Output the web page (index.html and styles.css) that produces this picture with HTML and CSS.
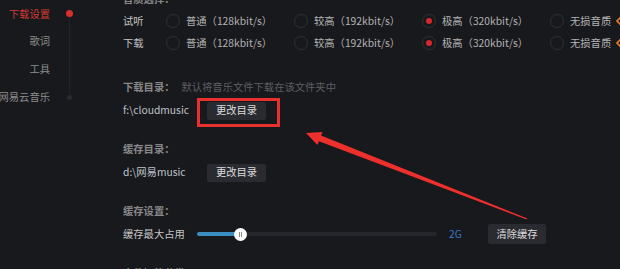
FILE: index.html
```html
<!DOCTYPE html>
<html lang="zh-CN">
<head>
<meta charset="utf-8">
<title>下载设置</title>
<link rel="stylesheet" href="styles.css">
</head>
<body>
<div class="app">
  <nav class="sidebar">
    <div class="nav-item first active"><span class="nav-text">下载设置</span><span class="nav-mark"><i class="dot red"></i></span></div>
    <div class="nav-item"><span class="nav-text">歌词</span><span class="nav-mark"></span></div>
    <div class="nav-item"><span class="nav-text">工具</span><span class="nav-mark"></span></div>
    <div class="nav-item last"><span class="nav-text">网易云音乐</span><span class="nav-mark"><i class="dot dim"></i></span></div>
  </nav>
  <main class="content">
    <section class="section quality">
      <div class="title">音质选择：</div>
      <div class="q-row">
        <span class="q-label">试听</span>
        <label class="option"><span class="radio"></span><span>普通（128kbit/s）</span></label>
        <label class="option"><span class="radio"></span><span>较高（192kbit/s）</span></label>
        <label class="option"><span class="radio checked"><i></i></span><span>极高（320kbit/s）</span></label>
        <label class="option"><span class="radio"></span><span>无损音质</span><svg class="sq" width="10" height="10" viewBox="0 0 10 10"><path d="M5 1 L9 5 L5 9 L1 5 Z" fill="none" stroke="#e0782c" stroke-width="1.6"/></svg></label>
      </div>
      <div class="q-row">
        <span class="q-label">下载</span>
        <label class="option"><span class="radio"></span><span>普通（128kbit/s）</span></label>
        <label class="option"><span class="radio"></span><span>较高（192kbit/s）</span></label>
        <label class="option"><span class="radio checked"><i></i></span><span>极高（320kbit/s）</span></label>
        <label class="option"><span class="radio"></span><span>无损音质</span><svg class="sq" width="10" height="10" viewBox="0 0 10 10"><path d="M5 1 L9 5 L5 9 L1 5 Z" fill="none" stroke="#e0782c" stroke-width="1.6"/></svg></label>
      </div>
    </section>

    <section class="section dir">
      <div class="title">下载目录：<span class="hint">默认将音乐文件下载在该文件夹中</span></div>
      <div class="row">
        <span class="path">f:\cloudmusic</span>
        <button class="btn">更改目录</button>
      </div>
    </section>

    <section class="section">
      <div class="title">缓存目录：</div>
      <div class="row">
        <span class="path">d:\网易music</span>
        <button class="btn">更改目录</button>
      </div>
    </section>

    <section class="section">
      <div class="title">缓存设置：</div>
      <div class="row">
        <span class="slider-label">缓存最大占用</span>
        <div class="track">
          <div class="fill" style="width:43px"></div>
          <div class="thumb" style="left:43px"><i></i><i></i></div>
        </div>
        <span class="size">2G</span>
        <button class="btn btn-clear">清除缓存</button>
      </div>
    </section>

    <section class="section">
      <div class="title">文件智能分类：</div>
    </section>
  </main>
</div>

<svg class="annot" width="620" height="269" viewBox="0 0 620 269">
  <rect x="198.5" y="99.5" width="80" height="26" fill="none" stroke="#e8302e" stroke-width="3"/>
  <polygon points="306,133 322.5,131.9 321.1,135.6 527.4,218.6 526.6,219.4 318.9,141.2 317.5,144.9" fill="#ee302d"/>
</svg>
</body>
</html>
```

FILE: styles.css
```css
* { box-sizing: border-box; }

html, body {
  margin: 0;
  padding: 0;
}

body {
  width: 620px;
  height: 269px;
  overflow: hidden;
  background: #18191d;
  font-family: "Noto Sans CJK SC", "Noto Sans", sans-serif;
  font-size: 10.3px;
  line-height: 1;
  color: #b4b4b4;
  position: relative;
}

.app {
  display: flex;
  height: 269px;
}

/* Sidebar */
.sidebar {
  width: 123px;
  flex-shrink: 0;
  display: flex;
  flex-direction: column;
}

.nav-item {
  display: flex;
  height: 27.75px;
  align-items: center;
}

.nav-text {
  width: 50px;
  display: flex;
  justify-content: flex-end;
  white-space: nowrap;
  color: #8c8c8c;
}

.nav-item.active .nav-text {
  color: #d33a32;
}

.nav-mark {
  width: 38px;
  align-self: stretch;
  display: flex;
  align-items: center;
  justify-content: center;
  background: linear-gradient(#222327, #222327) center / 1px 100% no-repeat;
}

.nav-item.first .nav-mark {
  background-position: center bottom;
  background-size: 1px 50%;
}

.nav-item.last .nav-mark {
  background-position: center top;
  background-size: 1px 50%;
}

.dot {
  display: block;
  border-radius: 50%;
}

.dot.red {
  width: 7px;
  height: 7px;
  background: #d9302e;
}

.dot.dim {
  width: 5px;
  height: 5px;
  background: #2a2b2f;
}

/* Content */
.content {
  flex: 1;
  min-width: 0;
  display: flex;
  flex-direction: column;
  margin-top: -12px;
}

.section + .section {
  margin-top: 16px;
}

.section.dir {
  margin-top: 22px;
}

.title {
  height: 22px;
  display: flex;
  align-items: center;
  font-weight: 700;
  color: #878787;
  white-space: nowrap;
}

.hint {
  margin-left: 7px;
  font-weight: 400;
  color: #5e5f63;
}

.q-row {
  height: 22px;
  display: flex;
  align-items: center;
  white-space: nowrap;
}

.q-label {
  width: 43px;
  flex-shrink: 0;
  color: #c4c4c4;
}

.option {
  width: 128px;
  flex-shrink: 0;
  display: flex;
  align-items: center;
  gap: 6px;
  color: #b3b3b3;
}

.radio {
  width: 14px;
  height: 14px;
  flex-shrink: 0;
  border: 1px solid #2e2f33;
  border-radius: 50%;
  display: flex;
  align-items: center;
  justify-content: center;
}

.radio.checked i {
  display: block;
  width: 6px;
  height: 6px;
  border-radius: 50%;
  background: #d8272b;
}

.sq {
  margin-left: -1px;
  flex-shrink: 0;
}

.row {
  height: 24px;
  display: flex;
  align-items: center;
  white-space: nowrap;
}

.path {
  width: 84px;
  flex-shrink: 0;
  color: #bfc3ca;
}

.btn {
  height: 18px;
  width: 59px;
  padding: 0;
  border: none;
  border-radius: 2px;
  background: #2a2b30;
  color: #dcdcdc;
  font-family: inherit;
  font-size: 10.3px;
  line-height: 1;
  margin-top: 1px;
}

.slider-label {
  width: 74px;
  flex-shrink: 0;
  color: #c4c4c4;
}

.track {
  width: 240px;
  height: 4px;
  border-radius: 2px;
  background: #24262b;
  position: relative;
  flex-shrink: 0;
}

.fill {
  height: 4px;
  border-radius: 2px;
  background: #3a8dc0;
}

.thumb {
  position: absolute;
  top: 50%;
  width: 13px;
  height: 13px;
  margin: -6.5px 0 0 -6.5px;
  border-radius: 50%;
  background: #ffffff;
  display: flex;
  align-items: center;
  justify-content: center;
  gap: 1px;
}

.thumb i {
  display: block;
  width: 1px;
  height: 5px;
  background: #8a8a8a;
}

.size {
  margin-left: 12px;
  width: 39px;
  flex-shrink: 0;
  color: #3b78c6;
}

.btn-clear {
  width: 58px;
  height: 20px;
  margin-top: 0;
}

/* Annotation overlay */
.annot {
  position: absolute;
  left: 0;
  top: 0;
  pointer-events: none;
}
```
